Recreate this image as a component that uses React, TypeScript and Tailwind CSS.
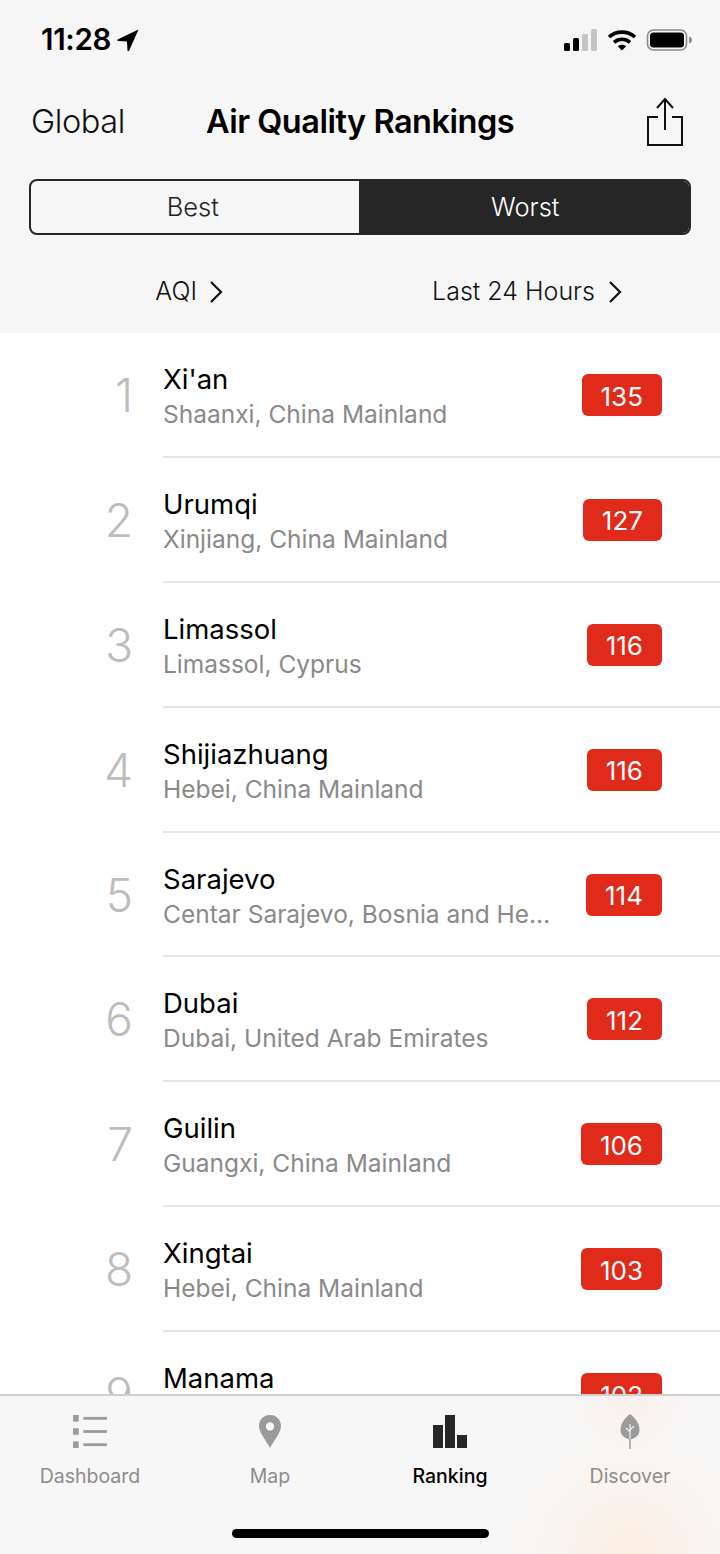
const rows = [
  { rank: 1, city: "Xi'an", region: 'Shaanxi, China Mainland', aqi: 135 },
  { rank: 2, city: 'Urumqi', region: 'Xinjiang, China Mainland', aqi: 127 },
  { rank: 3, city: 'Limassol', region: 'Limassol, Cyprus', aqi: 116 },
  { rank: 4, city: 'Shijiazhuang', region: 'Hebei, China Mainland', aqi: 116 },
  { rank: 5, city: 'Sarajevo', region: 'Centar Sarajevo, Bosnia and He…', aqi: 114 },
  { rank: 6, city: 'Dubai', region: 'Dubai, United Arab Emirates', aqi: 112 },
  { rank: 7, city: 'Guilin', region: 'Guangxi, China Mainland', aqi: 106 },
  { rank: 8, city: 'Xingtai', region: 'Hebei, China Mainland', aqi: 103 },
  { rank: 9, city: 'Manama', region: 'Capital, Bahrain', aqi: 102 },
];

function Chevron() {
  return (
    <svg width="14" height="22" viewBox="0 0 14 22" fill="none" stroke="#111" strokeWidth="2.2">
      <path d="M2 1l10 10L2 21" />
    </svg>
  );
}

function StatusBar() {
  return (
    <div className="flex h-[78px] items-center justify-between pl-[41px] pr-[27px] pt-[1px]">
      <div className="flex items-center gap-[6px]">
        <span className="text-[29.5px] font-semibold tracking-[-0.3px] text-black">11:28</span>
        <svg width="22" height="22" viewBox="0 0 22 22" fill="#000">
          <path d="M21.500 .5L.5 10.500v1.500l9.500 .5 .5 9.500h1.500z" />
        </svg>
      </div>
      <div className="flex items-center">
        <svg width="34" height="22" viewBox="0 0 34 22" className="mr-[9px]">
          <rect x="0" y="14" width="6" height="8" rx="1.5" fill="#000" />
          <rect x="9" y="9" width="6" height="13" rx="1.5" fill="#000" />
          <rect x="18" y="5" width="6" height="17" rx="1.5" fill="#c4c4c4" />
          <rect x="27" y="0" width="6" height="22" rx="1.5" fill="#c4c4c4" />
        </svg>
        <svg width="30" height="22" viewBox="0 0 30 22" fill="none" stroke="#000" strokeWidth="3.6" className="mr-[9px]">
          <path d="M2 8c7.500-6.500 18.500-6.500 26 0" />
          <path d="M7 13.300c4.600-4 11.400-4 16 0" />
          <path d="M15 21.500l-4.200-4.300c2.400-2 6-2 8.400 0z" fill="#000" stroke="none" />
        </svg>
        <svg width="47" height="22" viewBox="0 0 46 22">
          <rect x="1" y="1" width="39" height="20" rx="6" fill="none" stroke="#8a8a8a" strokeWidth="1.6" />
          <rect x="3.500" y="3.500" width="34" height="15" rx="3.500" fill="#000" />
          <path d="M42.500 7.500c2 .6 3 2 3 3.500s-1 2.900-3 3.500z" fill="#8a8a8a" />
        </svg>
      </div>
    </div>
  );
}

function Row({ rank, city, region, aqi }: (typeof rows)[number]) {
  return (
    <div className="flex h-[124.875px] shrink-0">
      <div className="w-[133px] shrink-0 pt-[31px] text-right text-[46px] leading-[62px] font-light text-[#bdbdbd]">
        {rank}
      </div>
      <div className="ml-[30px] flex flex-1 items-start justify-between border-b-2 border-[#e6e6e6] pr-[58px]">
        <div className="pt-[28px]">
          <div className="text-[27.5px] leading-[36px] text-black">{city}</div>
          <div className="text-[24.500px] leading-[34px] text-[#8a8a8a]">{region}</div>
        </div>
        <div className="mt-[41px] flex h-[42px] items-center rounded-[6px] bg-[#e02b1b] px-[19px] pt-[2px] text-[26px] text-white">
          {aqi}
        </div>
      </div>
    </div>
  );
}

function TabItem({ label, active, children }: { label: string; active?: boolean; children: React.ReactNode }) {
  return (
    <div className="flex flex-col items-center">
      <div className="flex h-[52px] items-center">{children}</div>
      <div className={`mt-[6px] text-[19.5px] leading-[26px] ${active ? 'font-medium text-black' : 'text-[#8c8c8c]'}`}>
        {label}
      </div>
    </div>
  );
}

export default function App() {
  return (
    <div className="flex h-[1554px] w-[720px] flex-col overflow-hidden bg-white font-['Inter',sans-serif]">
      {/* Header */}
      <div className="h-[333px] shrink-0 bg-[#f6f6f6]">
        <StatusBar />
        <div className="flex h-[88px] items-center justify-between pl-[31px] pr-[37px]">
          <span className="w-[150px] text-[32.5px] font-light tracking-[-0.4px] text-[#111]">Global</span>
          <span className="text-[32.5px] font-semibold tracking-[-0.5px] text-black">Air Quality Rankings</span>
          <div className="flex w-[144px] justify-end">
            <svg width="36" height="50" viewBox="0 0 36 50" fill="none" stroke="#111" strokeWidth="2">
              <path d="M11 20H1v28h34V20H25" />
              <path d="M18 33V2M10 11l8-9 8 9" />
            </svg>
          </div>
        </div>
        <div className="mx-[29px] mt-[13px] flex h-[56px] overflow-hidden rounded-[8px] border-2 border-[#262626] text-[25.5px]">
          <div className="flex flex-1 -translate-x-[2px] items-center justify-center pt-[1px] font-light text-[#222]">Best</div>
          <div className="flex flex-1 items-center justify-center bg-[#262626] pl-[3px] pt-[1px] font-light text-white">Worst</div>
        </div>
        <div className="mt-[43px] flex h-[28px] items-center text-[25px] font-light text-[#111]">
          <div className="flex w-[223px] items-center justify-end gap-[12px]">
            <span>AQI</span>
            <Chevron />
          </div>
          <div className="ml-auto flex items-center gap-[13px] pr-[98px]">
            <span>Last 24 Hours</span>
            <Chevron />
          </div>
        </div>
      </div>

      {/* List */}
      <div className="flex min-h-0 flex-1 flex-col overflow-hidden">
        {rows.map((r) => (
          <Row key={r.rank} {...r} />
        ))}
      </div>

      {/* Tab bar */}
      <div className="h-[160px] shrink-0 border-t-2 border-[#d0d0d0] bg-[#f7f7f7] bg-[radial-gradient(circle_at_630px_160px,#fdeee2_0,#f9f4ef_70px,transparent_130px),radial-gradient(circle_at_630px_0px,#fbf0ee_0,transparent_70px)]">
        <div className="grid grid-cols-4 pt-[9px]">
          <TabItem label="Dashboard">
            <svg width="34" height="33" viewBox="0 0 36 35" fill="#9b9b9b">
              <rect x="0" y="0" width="6" height="7" />
              <rect x="11" y="2" width="25" height="3" />
              <rect x="0" y="14" width="6" height="7" />
              <rect x="11" y="16" width="25" height="3" />
              <rect x="0" y="28" width="6" height="7" />
              <rect x="11" y="30" width="25" height="3" />
            </svg>
          </TabItem>
          <TabItem label="Map">
            <svg width="24" height="33" viewBox="0 0 26 36">
              <path
                fillRule="evenodd"
                fill="#9b9b9b"
                d="M13 0C5.800 0 1 5.400 1 12c0 7 7.500 15.500 12 24 4.500-8.500 12-17 12-24C25 5.400 20.200 0 13 0zm0 8a4.500 4.500 0 110 9 4.500 4.500 0 010-9z"
              />
            </svg>
          </TabItem>
          <TabItem label="Ranking" active>
            <svg width="34" height="33" viewBox="0 0 34 33" fill="#262626">
              <rect x="0" y="10" width="10" height="23" />
              <rect x="12" y="0" width="10" height="33" />
              <rect x="24" y="20" width="10" height="13" />
            </svg>
          </TabItem>
          <TabItem label="Discover">
            <svg width="20" height="35" viewBox="0 0 20 35">
              <path fill="#9b9b9b" d="M10 0C5 4 .5 9 .5 16c0 5 4 8.500 9.500 9.500 5.500-1 9.500-4.500 9.500-9.500C19.500 9 15 4 10 0z" />
              <path stroke="#f2f2f2" strokeWidth="1.200" fill="none" d="M10 10v16M10 18l-4-4M10 16l4-4" />
              <path stroke="#9b9b9b" strokeWidth="1.500" fill="none" d="M10 25v10" />
            </svg>
          </TabItem>
        </div>
        <div className="mx-auto mt-[40px] h-[9px] w-[257px] rounded-full bg-black" />
      </div>
    </div>
  );
}
